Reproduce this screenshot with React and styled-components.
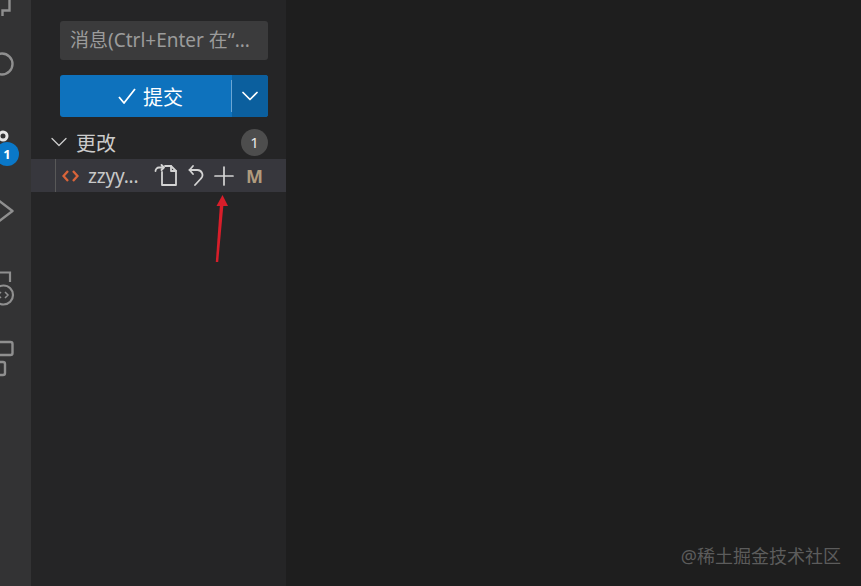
import React from 'react';
import styled, { createGlobalStyle } from 'styled-components';

const GlobalStyle = createGlobalStyle`
    html, body {
        margin: 0;
        padding: 0;
        height: 100%;
        background: #1e1e1e;
    }
    #root {
        height: 100%;
    }
`;

const Window = styled.div`
    position: relative;
    display: flex;
    width: 861px;
    height: 586px;
    overflow: hidden;
    background: #1e1e1e;
    font-family: "Noto Sans", "Noto Sans CJK SC", sans-serif;
`;

const ActivityBar = styled.nav`
    width: 31px;
    flex: none;
    background: #333334;
    overflow: hidden;
    display: flex;
    flex-direction: column;
`;

const ActivityIcon = styled.div`
    position: relative;
    flex: none;
    height: ${(p) => p.$height}px;
    svg {
        display: block;
        overflow: visible;
    }
`;

const Badge = styled.span`
    position: absolute;
    left: -5px;
    top: 52px;
    width: 24px;
    height: 24px;
    border-radius: 50%;
    background: #0a78c8;
    color: #fff;
    font-size: 13px;
    font-weight: 700;
    line-height: 24px;
    text-align: center;
`;

const SideBar = styled.aside`
    width: 255px;
    flex: none;
    background: #252526;
    display: flex;
    flex-direction: column;
    padding-top: 21px;
    box-sizing: border-box;
`;

const CommitArea = styled.div`
    padding: 0 18px 0 29px;
    display: flex;
    flex-direction: column;
    gap: 15px;
`;

const MessageInput = styled.div`
    height: 39px;
    border-radius: 3px;
    background: #3b3b3c;
    color: #9b9b9b;
    font-size: 19px;
    line-height: 39px;
    padding-left: 10px;
    white-space: nowrap;
    overflow: hidden;
`;

const CommitButton = styled.div`
    height: 42px;
    display: flex;
    border-radius: 3px;
    overflow: hidden;
    color: #fff;
    background: #0e72bd;
`;

const CommitMain = styled.div`
    width: 171px;
    display: flex;
    align-items: center;
    justify-content: center;
    gap: 6px;
    font-size: 20px;
    padding-left: 9px;
    box-sizing: border-box;
`;

const Divider = styled.div`
    width: 1px;
    margin: 5px 0;
    background: #6ba6d4;
`;

const CommitDrop = styled.div`
    flex: 1;
    display: flex;
    align-items: center;
    justify-content: center;
    background: #0b5f9e;
`;

const SectionHeader = styled.div`
    height: 34px;
    margin-top: 8px;
    padding: 0 18px 0 20px;
    display: flex;
    align-items: center;
    color: #cccccc;
    font-size: 20px;
`;

const SectionTitle = styled.span`
    margin-left: 9px;
    flex: 1;
`;

const CountBadge = styled.span`
    width: 27px;
    height: 27px;
    border-radius: 50%;
    background: #4d4d4d;
    color: #e8e8e8;
    font-size: 15px;
    line-height: 27px;
    text-align: center;
`;

const FileRow = styled.div`
    height: 33px;
    background: #37373d;
    display: flex;
    align-items: center;
    position: relative;
    padding-left: 31px;
`;

const IndentGuide = styled.div`
    position: absolute;
    left: 24px;
    top: 0;
    bottom: 0;
    width: 1px;
    background: #585858;
`;

const FileName = styled.span`
    margin-left: 9px;
    width: 61px;
    flex: none;
    color: #c8c8c8;
    font-size: 19px;
    letter-spacing: -0.2px;
    white-space: nowrap;
`;

const RowActions = styled.div`
    display: flex;
    align-items: center;
    gap: 10px;
    margin-left: 5px;
    color: #d4d4d4;

    svg {
        display: block;
    }
`;

const Status = styled.span`
    margin-left: 12px;
    color: #b09b7d;
    font-size: 18px;
    font-weight: 700;
`;

const Editor = styled.main`
    flex: 1;
    background: #1e1e1e;
`;

const Watermark = styled.div`
    position: absolute;
    right: 20px;
    bottom: 20px;
    color: #5c5c5c;
    font-size: 18px;
    line-height: 20px;
    white-space: nowrap;
`;

const ArrowMark = styled.svg`
    position: absolute;
    left: 208px;
    top: 190px;
`;

const Stroke = ({ w, h, children, width = 1.4 }) => (
    <svg width={w} height={h} viewBox={`0 0 ${w} ${h}`} fill="none" stroke="currentColor" strokeWidth={width} strokeLinecap="round" strokeLinejoin="round">
        {children}
    </svg>
);

const App = () => {
    return (
        <Window>
            <GlobalStyle />
            <ActivityBar>
                <ActivityIcon $height={40}>
                    <svg width="31" height="20" fill="none" stroke="#8f8f8f" strokeWidth="2.4">
                        <path d="M9.500 -2V10.500H2.500V16" />
                    </svg>
                </ActivityIcon>
                <ActivityIcon $height={50}>
                    <svg width="31" height="48" fill="none" stroke="#8f8f8f" strokeWidth="2.4">
                        <circle cx="2" cy="24" r="10.500" />
                    </svg>
                </ActivityIcon>
                <ActivityIcon $height={100}>
                    <svg width="31" height="58" fill="none" stroke="#e6e6e6" strokeWidth="3">
                        <circle cx="3" cy="46" r="4" />
                    </svg>
                    <Badge>1</Badge>
                </ActivityIcon>
                <ActivityIcon $height={70}>
                    <svg width="31" height="40" fill="none" stroke="#8f8f8f" strokeWidth="2.4" strokeLinejoin="round">
                        <path d="M-2 10L12.500 21L-2 32" />
                    </svg>
                </ActivityIcon>
                <ActivityIcon $height={70}>
                    <svg width="31" height="50" fill="none" stroke="#8f8f8f" strokeWidth="2.200">
                        <path d="M-2 12.500H10V22" />
                        <circle cx="3.500" cy="35" r="9.500" />
                        <path d="M1 32l-3 3 3 3M5 32l3 3-3 3" strokeWidth="1.500" />
                    </svg>
                </ActivityIcon>
                <ActivityIcon $height={70}>
                    <svg width="31" height="50" fill="none" stroke="#8f8f8f" strokeWidth="2.400">
                        <rect x="-6" y="12" width="18.500" height="13" rx="2" />
                        <rect x="-6" y="32" width="11" height="13" rx="2" />
                    </svg>
                </ActivityIcon>
            </ActivityBar>

            <SideBar>
                <CommitArea>
                    <MessageInput>消息(Ctrl+Enter 在“...</MessageInput>
                    <CommitButton>
                        <CommitMain>
                            <Stroke w={20} h={18} width={1.8}>
                                <path d="M2 10l5 6L18 2" strokeLinecap="butt" />
                            </Stroke>
                            提交
                        </CommitMain>
                        <Divider />
                        <CommitDrop>
                            <Stroke w={16} h={10} width={1.7}>
                                <path d="M1 1.500l7 7 7-7" />
                            </Stroke>
                        </CommitDrop>
                    </CommitButton>
                </CommitArea>

                <SectionHeader>
                    <Stroke w={16} h={10} width={1.3}>
                        <path d="M1 1.500l7 7 7-7" />
                    </Stroke>
                    <SectionTitle>更改</SectionTitle>
                    <CountBadge>1</CountBadge>
                </SectionHeader>

                <FileRow>
                    <IndentGuide />
                    <svg width="17" height="12" viewBox="0 0 17 12" fill="none" stroke="#d9643a" strokeWidth="2.300">
                        <path d="M6 1L1.500 6 6 11M11 1l4.500 5L11 11" />
                    </svg>
                    <FileName>zzyy...</FileName>
                    <RowActions>
                        <Stroke w={24} h={23} width={1.8}>
                            <path d="M8 8v13h14V7l-5-5h-6" />
                            <path d="M17 2v5h5" />
                            <path d="M1.500 7a3.500 3.500 0 0 1 3.500-3.500h5M7.500 1L10 3.500 7.500 6" />
                        </Stroke>
                        <Stroke w={16} h={23} width={1.8}>
                            <path d="M1.500 6h8a5 5 0 0 1 3.500 8.500L7 21" />
                            <path d="M5 2L1.500 6 5 10" />
                        </Stroke>
                        <Stroke w={20} h={20} width={1.7}>
                            <path d="M10 1v18M1 10h18" />
                        </Stroke>
                    </RowActions>
                    <Status>M</Status>
                </FileRow>
            </SideBar>

            <Editor />

            <ArrowMark width="24" height="76" viewBox="0 0 24 76">
                <path d="M7.800 72L10.200 72L15.500 14H12z" fill="#d81e2a" />
                <path d="M14.500 5L20 16H8.500z" fill="#d81e2a" />
            </ArrowMark>

            <Watermark>@稀土掘金技术社区</Watermark>
        </Window>
    );
};

export default App;
